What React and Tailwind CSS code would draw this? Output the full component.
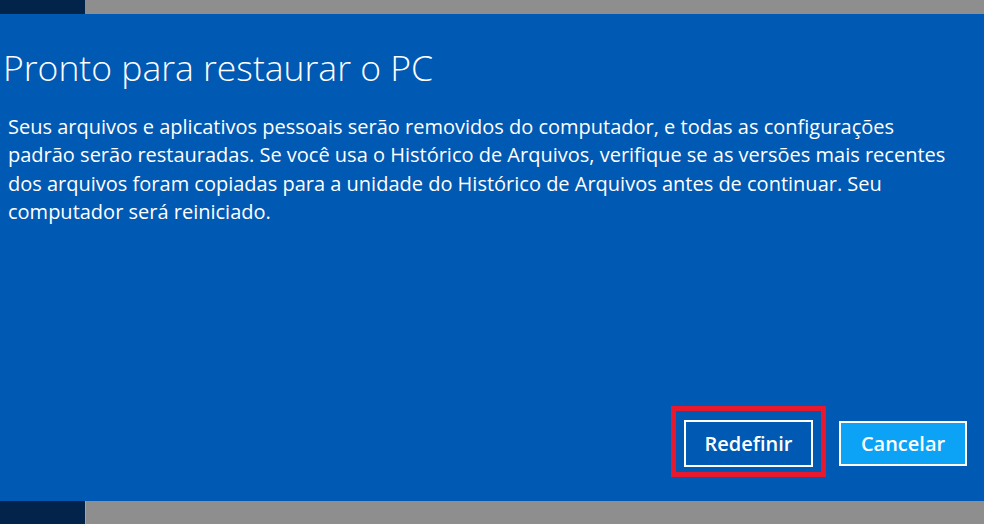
import React from 'react';

const lines = [
  'Seus arquivos e aplicativos pessoais serão removidos do computador, e todas as configurações',
  'padrão serão restauradas. Se você usa o Histórico de Arquivos, verifique se as versões mais recentes',
  'dos arquivos foram copiadas para a unidade do Histórico de Arquivos antes de continuar. Seu',
  'computador será reiniciado.',
];

export default function App() {
  return (
    <div className="flex flex-col h-[524px] w-[984px] overflow-hidden font-['Open_Sans',sans-serif] text-white">
      <div className="flex h-[14px] shrink-0">
        <div className="w-[85px] bg-[#02244a]" />
        <div className="flex-1 bg-[#8e8e8e]" />
      </div>

      <div className="flex-1 flex flex-col bg-[#0059b2]">
        <h1 className="pl-[3px] pt-[31px] text-[35.5px] font-light leading-[44px]">
          Pronto para restaurar o PC
        </h1>
        <div className="pl-[8px] pt-[24px] text-[20px] leading-[28.4px]">
          {lines.map((line) => (
            <div key={line} className="whitespace-nowrap">{line}</div>
          ))}
        </div>

        <div className="mt-auto flex justify-end items-end gap-[13px] pr-[17px] pb-[24px]">
          <div className="border-[5px] border-[#e8192c] px-[8px] pt-[9px] pb-[5px]">
            <button className="w-[129px] h-[47px] border-2 border-white bg-[#0059b2] text-[20px] font-semibold">
              Redefinir
            </button>
          </div>
          <button className="mb-[11px] w-[128px] h-[45px] border-2 border-white bg-[#0ca3f7] text-[20px] font-semibold">
            Cancelar
          </button>
        </div>
      </div>

      <div className="flex h-[23px] shrink-0">
        <div className="w-[85px] bg-[#02244a]" />
        <div className="w-px bg-[#9aa6b6]" />
        <div className="flex-1 bg-[#8e8e8e]" />
      </div>
    </div>
  );
}
